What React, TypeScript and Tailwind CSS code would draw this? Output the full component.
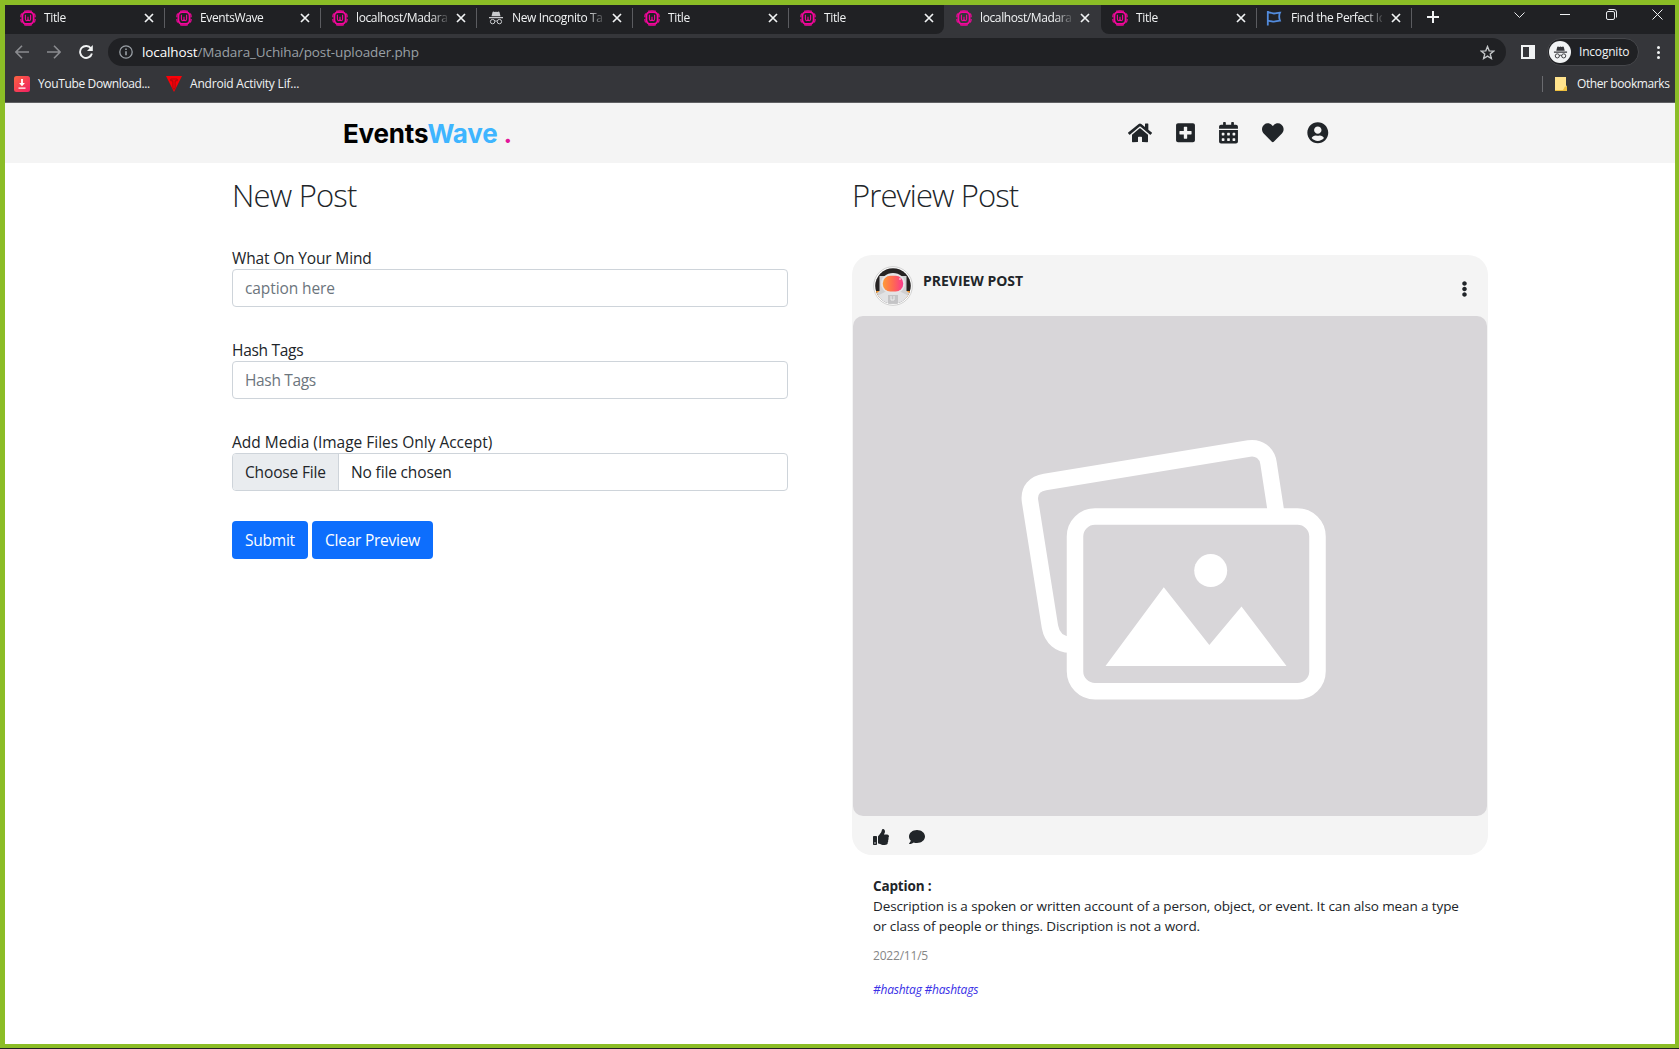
import type { ReactNode } from "react";
import {
  FaHome,
  FaPlusSquare,
  FaCalendarAlt,
  FaHeart,
  FaUserCircle,
  FaThumbsUp,
  FaComment,
  FaEllipsisV,
} from "react-icons/fa";

function WampIcon() {
  return (
    <svg viewBox="0 0 16 16" className="size-4 shrink-0" fill="none" stroke="#f5069c">
      <path
        d="M4 1.200C5.200.8 6.500.7 8 .7s2.800.1 4 .5M14.400 3.600c.6 1.100.8 2.300.8 3.600M15.200 9c0 1.300-.3 2.400-.8 3.500M12 14.800c-1.200.4-2.500.5-4 .5s-2.800-.1-4-.5M1.600 12.500C1 11.400.8 10.300.8 9M.8 7.200c0-1.300.2-2.500.8-3.600"
        strokeWidth="1.100"
      />
      <rect x="2.400" y="2.100" width="11.200" height="11.800" rx="3.800" strokeWidth="1.800" />
      <path d="M5.400 4.800v4c0 1.300.4 1.900 1.300 1.900S8 10.100 8 9V6.800V9c0 1.100.4 1.700 1.300 1.700s1.300-.6 1.300-1.900v-4" strokeWidth="1.100" />
    </svg>
  );
}

function SpyIcon({ className, color }: { className: string; color: string }) {
  return (
    <svg viewBox="0 0 16 16" className={className} fill={color}>
      <path d="M5.300 1.600 6.700 2 8 1.700 9.300 2l1.400-.4c.4 0 .6.2.8.6l1 4h-9l1-4c.2-.4.4-.6.8-.6zM1 7h14v1.200H1z" />
      <g fill="none" stroke={color} strokeWidth="1">
        <circle cx="4.600" cy="11.600" r="2.200" />
        <circle cx="11.400" cy="11.600" r="2.200" />
        <path d="M6.800 11.300c.8-.5 1.600-.5 2.400 0" />
      </g>
    </svg>
  );
}

function FlagIcon() {
  return (
    <svg viewBox="0 0 16 16" className="-ml-px mr-px size-4 shrink-0" fill="none" stroke="#528bdc" strokeWidth="1.800">
      <path d="M1.800 1v14.500M1.800 2.700c2.500-.8 4.200.8 6.200.8s3.500-.8 6-.8c-.8 1.500-.8 2.500-.8 4s.3 2.500.8 4c-2.500 0-4 1-6 1s-3.700-1.300-6.200-.8" />
    </svg>
  );
}

function Tab({
  title,
  icon,
  divider = true,
}: {
  title: string;
  icon: ReactNode;
  divider?: boolean;
}) {
  return (
    <div className="flex h-[29px] w-[156px] shrink-0 items-center pb-[4px] pl-3">
      {icon}
      <span className="ml-2 w-[91px] overflow-hidden whitespace-nowrap text-[12px] leading-4 tracking-[-0.38px] text-[#f1f3f4] [mask-image:linear-gradient(to_right,black_82%,transparent_104%)]">
        {title}
      </span>
      <svg viewBox="0 0 10 10" className="ml-[9px] size-[10px] shrink-0" stroke="#f1f3f4" strokeWidth="1.700">
        <path d="M1 1l8 8M9 1L1 9" />
      </svg>
      <span className={divider ? "-mr-px ml-auto h-5 w-px bg-[#5b5c60]" : "hidden"} />
    </div>
  );
}

function TabStrip() {
  return (
    <div className="flex h-[29px] bg-[#35363a]">
      <div className="flex w-[939px] shrink-0 rounded-br-lg bg-[#202124] pl-[3px]">
        <Tab title="Title" icon={<WampIcon />} />
        <Tab title="EventsWave" icon={<WampIcon />} />
        <Tab title="localhost/Madara_Uchiha" icon={<WampIcon />} />
        <Tab title="New Incognito Tab" icon={<SpyIcon className="size-4 shrink-0" color="#c9cbce" />} />
        <Tab title="Title" icon={<WampIcon />} />
        <Tab title="Title" icon={<WampIcon />} divider={false} />
      </div>
      <Tab title="localhost/Madara_Uchiha" icon={<WampIcon />} divider={false} />
      <div className="ml-px flex flex-1 rounded-bl-lg bg-[#202124]">
        <div className="-ml-px flex w-[311px]">
          <div className="w-[155px]">
            <Tab title="Title" icon={<WampIcon />} />
          </div>
          <Tab title="Find the Perfect Icon" icon={<FlagIcon />} />
        </div>
        <svg viewBox="0 0 12 12" className="ml-4 mt-[6px] size-3" stroke="#f1f3f4" strokeWidth="2">
          <path d="M6 0v12M0 6h12" />
        </svg>
        <svg viewBox="0 0 11 6" className="ml-auto mt-[7px] h-[6px] w-[11px]" fill="none" stroke="#e8eaed">
          <path d="M.5.500l5 5 5-5" />
        </svg>
        <div className="ml-[35px] mt-[9px] h-px w-[10px] bg-[#f1f3f4]" />
        <svg viewBox="0 0 11 11" className="ml-[36px] mt-[4px] size-[11px]" fill="none" stroke="#e8eaed">
          <rect x=".5" y="2.500" width="8" height="8" rx="1.500" />
          <path d="M2.500.500h5.500a2.500 2.500 0 0 1 2.500 2.500v5.500" />
        </svg>
        <svg viewBox="0 0 11 11" className="ml-[35px] mr-3 mt-[4px] size-[11px]" fill="none" stroke="#f1f3f4">
          <path d="M.5.500l10 10M10.500.500l-10 10" />
        </svg>
      </div>
    </div>
  );
}

function AddressBar() {
  return (
    <div className="flex h-9 items-center">
      <svg viewBox="0 0 14 14" className="ml-[10px] size-[14px]" fill="none" stroke="#8b8c90" strokeWidth="1.600">
        <path d="M14 7H1.200M7 .800.900 7 7 13.200" />
      </svg>
      <svg viewBox="0 0 14 14" className="ml-[18px] size-[14px]" fill="none" stroke="#8b8c90" strokeWidth="1.600">
        <path d="M0 7h12.800M7 .800 13.100 7 7 13.200" />
      </svg>
      <svg viewBox="0 0 14 14" className="ml-[18px] size-[14px]" fill="none" stroke="#f1f3f4" strokeWidth="1.900">
        <path d="M12 3.500A6 6 0 1 0 12.900 8.500" />
        <path d="M13.800 0v6H8z" fill="#f1f3f4" stroke="none" />
      </svg>
      <div className="ml-[15px] flex h-7 w-[1398px] items-center rounded-full bg-[#202124] px-[11px]">
        <svg viewBox="0 0 14 14" className="size-[14px]" fill="none" stroke="#9aa0a6" strokeWidth="1.300">
          <circle cx="7" cy="7" r="6.200" />
          <path d="M7 6.200v4M7 3.600v1.400" strokeWidth="1.600" />
        </svg>
        <span className="ml-[9px] text-[13.500px] tracking-[-0.12px] text-[#9aa0a6]">
          <span className="text-white">localhost</span>/Madara_Uchiha/post-uploader.php
        </span>
        <svg viewBox="0 0 24 24" className="ml-auto size-[15px]" fill="none" stroke="#c4c7c9" strokeWidth="2.200">
          <path d="M12 2.500l2.700 6.800 7.300.5-5.600 4.700 1.800 7.100L12 17.700l-6.200 3.900 1.800-7.100L2 9.800l7.300-.5z" />
        </svg>
      </div>
      <div className="ml-[15px] flex size-[14px] border-2 border-r-[6px] border-[#f1f3f4]" />
      <div className="ml-3 flex h-7 w-[92px] items-center rounded-full border border-[#46474b] bg-[#202124] pl-[1px]">
        <div className="flex size-[22px] items-center justify-center rounded-full bg-[#f1f3f4]">
          <SpyIcon className="size-[15px]" color="#35363a" />
        </div>
        <span className="ml-[8px] text-[12px] tracking-[-0.2px] text-[#f1f3f4]">Incognito</span>
      </div>
      <div className="ml-[18px] flex flex-col gap-[2px]">
        <span className="size-[3px] rounded-full bg-[#f1f3f4]" />
        <span className="size-[3px] rounded-full bg-[#f1f3f4]" />
        <span className="size-[3px] rounded-full bg-[#f1f3f4]" />
      </div>
    </div>
  );
}

function Bookmarks() {
  return (
    <div className="flex h-8 items-start pt-[5px] text-[12px] leading-[18px] text-[#f1f3f4]">
      <svg viewBox="0 0 16 16" className="ml-[9px] mt-px size-4">
        <defs>
          <linearGradient id="dl" x1="0" y1="0" x2="1" y2="1">
            <stop offset="0" stopColor="#fb6340" />
            <stop offset="1" stopColor="#f01f64" />
          </linearGradient>
        </defs>
        <rect width="16" height="16" rx="2.500" fill="url(#dl)" />
        <path d="M7.100 3h1.800v4h2L8 10.200 5.100 7h2zM4.500 11.500h7v1.300h-7z" fill="#fff" />
      </svg>
      <span className="ml-2 w-[112px] whitespace-nowrap tracking-[-0.36px]">YouTube Download...</span>
      <svg viewBox="0 0 16 16" className="ml-4 mt-px size-4">
        <path d="M0 0h16L8 16z" fill="#fb0007" />
        <path d="M4.800 3h6.400v1.800H9.100V12L8 13.500 6.900 12V4.800H4.800z" fill="#fb0007" stroke="#8a0d12" strokeWidth=".7" />
      </svg>
      <span className="ml-2 w-[112px] whitespace-nowrap tracking-[-0.2px]">Android Activity Lif...</span>
      <span className="ml-auto mt-px h-4 w-px bg-[#6a6b6f]" />
      <svg viewBox="0 0 12 14" className="ml-3 mt-[2px] h-[14px] w-3">
        <path d="M0 0h11v8l1 2v4H0z" fill="#ffe38d" />
        <path d="M0 13h8l2-3.500h2V14H0z" fill="#eebf3e" />
      </svg>
      <span className="ml-[10px] mr-[5px] w-[93px] whitespace-nowrap tracking-[-0.4px]">Other bookmarks</span>
    </div>
  );
}

function SiteNav() {
  return (
    <nav className="flex h-[60px] items-center bg-[#f4f4f4] text-[#212529]">
      <div className="ml-[338px] w-[170px] whitespace-nowrap pt-[2px] font-['Inter',sans-serif] text-[26px] font-bold leading-8 tracking-[-0.18px] text-black">
        Events<span className="text-[#3eb5ff]">Wave</span> <span className="text-[#e3169a]">.</span>
      </div>
      <FaHome className="ml-[615px] h-[21.600px] w-6" />
      <FaPlusSquare className="ml-6 h-[21.600px] w-[19px]" />
      <FaCalendarAlt className="ml-6 h-[21.600px] w-[19px]" />
      <FaHeart className="ml-6 size-[21.600px]" />
      <FaUserCircle className="ml-[23.500px] size-[21.600px]" />
    </nav>
  );
}

function Field({ label, children }: { label: ReactNode; children: ReactNode }) {
  return (
    <div className="mb-[30px]">
      <label className="block h-6 whitespace-nowrap pt-px leading-6 tracking-[-0.16px]">{label}</label>
      {children}
    </div>
  );
}

function NewPostForm() {
  return (
    <section className="w-[556px] text-[15.500px]">
      <h1 className="mb-[31px] h-[38px] text-[31px] font-light leading-[38px] tracking-[-0.800px]">New Post</h1>
      <Field label="What On Your Mind">
        <div className="flex h-[38px] items-center rounded border border-[#ced4da] px-3 pt-[2px] tracking-[-0.1px] text-[#6c757d]">
          caption here
        </div>
      </Field>
      <Field label={<span className="tracking-[-0.3px]">Hash Tags</span>}>
        <div className="flex h-[38px] items-center rounded border border-[#ced4da] px-3 pt-[2px] tracking-[-0.35px] text-[#6c757d]">
          Hash Tags
        </div>
      </Field>
      <Field label={<span className="tracking-[-0.01px]">Add Media (Image Files Only Accept)</span>}>
        <div className="flex h-[38px] overflow-hidden rounded border border-[#ced4da] tracking-[-0.15px]">
          <span className="flex w-[106px] items-center whitespace-nowrap border-r border-[#ced4da] bg-[#e9ecef] pl-3 pt-[2px]">
            Choose File
          </span>
          <span className="flex items-center pl-3 pt-[2px]">No file chosen</span>
        </div>
      </Field>
      <div className="flex gap-1 text-white">
        <button className="h-[38px] w-[76px] rounded bg-[#0d6efd] pt-[2px] tracking-[-0.25px]">Submit</button>
        <button className="h-[38px] w-[121px] rounded bg-[#0d6efd] pt-[2px] tracking-[-0.25px]">Clear Preview</button>
      </div>
    </section>
  );
}

function Avatar() {
  return (
    <svg viewBox="0 0 40 40" className="size-10">
      <defs>
        <clipPath id="face">
          <circle cx="20" cy="20" r="17.800" />
        </clipPath>
        <linearGradient id="visor">
          <stop offset="0" stopColor="#ff9a36" />
          <stop offset=".5" stopColor="#ff6a52" />
          <stop offset="1" stopColor="#f93a8d" />
        </linearGradient>
      </defs>
      <circle cx="20" cy="20" r="19.300" fill="#fff" stroke="#c4c4c4" strokeWidth=".8" />
      <g clipPath="url(#face)">
        <rect width="40" height="40" fill="#262323" />
        <path d="M0 25h40v8H0z" fill="#fb9a2d" />
        <path d="M6.500 10h27v15l4 3v12h-35V28l4-3z" fill="#cfcfd1" />
        <path d="M4 30l8-4h16l8 4v10H4z" fill="#e2e2e4" />
        <path d="M15 29h10v9H15z" fill="#c4c4c6" />
        <path d="M18 30v4h3v-4" fill="none" stroke="#efefef" />
      </g>
      <ellipse cx="20" cy="17.500" rx="12" ry="10.500" fill="#e4e4e6" />
      <rect x="9.800" y="9.700" width="20.400" height="15.800" rx="7.500" fill="url(#visor)" />
      <circle cx="27" cy="13" r=".8" fill="#fff" />
    </svg>
  );
}

function PlaceholderPicture() {
  return (
    <svg viewBox="853 316 634 500" className="mx-px h-[500px] w-[634px] rounded-[10px] bg-[#d8d6d9]" fill="none" stroke="#fff" strokeWidth="16.500">
      <path d="M1070 644.500C1060 644.500 1052 638 1050 627L1030 501C1028.500 490 1035 483.500 1045 482L1249 448.500C1259 447 1267 453 1268.500 463L1276.500 515" />
      <rect x="1075" y="516.500" width="242.500" height="174.700" rx="20" />
      <g fill="#fff" stroke="none">
        <circle cx="1210.700" cy="570.600" r="16.500" />
        <path d="M1105.500 666L1163.800 587.300 1209.300 645 1241.500 606.500 1286.500 666z" />
      </g>
    </svg>
  );
}

function PreviewPost() {
  return (
    <section className="ml-16 w-[636px]">
      <h1 className="mb-[41px] h-[38px] text-[31px] font-light leading-[38px] tracking-[-0.900px]">Preview Post</h1>
      <article className="h-[600px] rounded-[20px] bg-[#f4f4f4]">
        <header className="flex h-[61px] items-start pl-[21px] pr-[20.500px] pt-[11px]">
          <Avatar />
          <span className="ml-[10px] mt-[5px] text-[14px] font-bold leading-5 tracking-[-0.020px]">PREVIEW POST</span>
          <FaEllipsisV className="ml-auto mt-[15px] h-4 w-[7px]" />
        </header>
        <PlaceholderPicture />
        <footer className="flex h-[39px] items-center gap-5 pb-px pl-[21px] pt-[4px]">
          <FaThumbsUp className="size-4" />
          <FaComment className="size-4" />
        </footer>
      </article>
      <div className="pl-[21px] pt-[21px] text-[13.500px] leading-5">
        <p className="font-bold tracking-[-0.15px]">Caption :</p>
        <p className="w-[600px] tracking-[-0.105px]">
          Description is a spoken or written account of a person, object, or event. It can also mean a type
          <br />
          or class of people or things. Discription is not a word.
        </p>
        <p className="mt-[10px] text-[12px] tracking-[-0.2px] text-[#868686]">2022/11/5</p>
        <p className="mt-[14px] text-[12px] italic tracking-[-0.230px] text-[#3930e6]">#hashtag #hashtags</p>
      </div>
    </section>
  );
}

export default function App() {
  return (
    <div className="h-[1049px] w-[1679px] overflow-hidden bg-[#202124] font-['Open_Sans',sans-serif]">
      <div className="flex h-[1048px] flex-col border-b-[4px] border-l-[5px] border-r-[4px] border-t-[5px] border-[#8bbd26] bg-white">
        <header className="h-[98px] shrink-0 border-b border-[#5f6063] bg-[#35363a]">
          <TabStrip />
          <AddressBar />
          <Bookmarks />
        </header>
        <SiteNav />
        <main className="flex pl-[227px] pt-[13px] text-[#212529]">
          <NewPostForm />
          <PreviewPost />
        </main>
      </div>
    </div>
  );
}
